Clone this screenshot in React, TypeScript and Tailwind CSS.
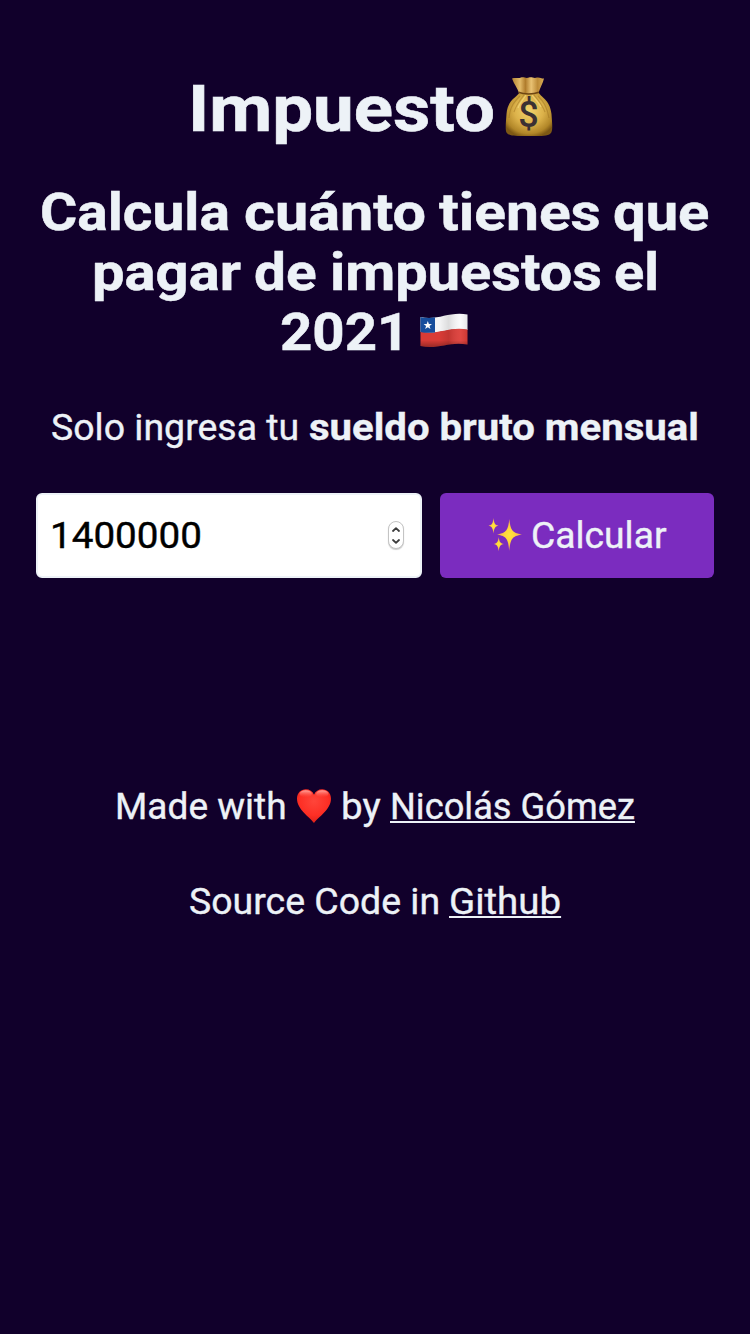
import React, { useState } from "react";

type WordProps = { box: string; scale: string; children: React.ReactNode };

/* A run of text in a fixed-width box, stretched horizontally from its left edge. */
function Word({ box, scale, children }: WordProps) {
  return (
    <span className={`block shrink-0 whitespace-nowrap ${box}`}>
      <span className={`inline-block origin-left ${scale}`}>{children}</span>
    </span>
  );
}

function MoneyBag() {
  return (
    <svg width="48" height="62" viewBox="0 0 48 62" aria-hidden="true">
      <defs>
        <radialGradient id="bag" cx="0.5" cy="0.42" r="0.62">
          <stop offset="0" stopColor="#f2d36c" />
          <stop offset="0.5" stopColor="#dcb24a" />
          <stop offset="0.85" stopColor="#b18628" />
          <stop offset="1" stopColor="#7d5814" />
        </radialGradient>
        <linearGradient id="ruffle" x1="0" x2="1">
          <stop offset="0" stopColor="#b38334" />
          <stop offset="0.25" stopColor="#e3bb69" />
          <stop offset="0.42" stopColor="#b07c2c" />
          <stop offset="0.6" stopColor="#e9c273" />
          <stop offset="0.8" stopColor="#bd8b38" />
          <stop offset="1" stopColor="#d9ac55" />
        </linearGradient>
      </defs>
      <path d="M14.500 16 C13 21 2.500 23 1.500 38 C1 46 0 53 1.500 56.500 C4 60.500 12 60 24 60 C36 60 44 60.500 46.300 56.500 C48 53 47 46 46.500 38 C45 23 35 21 33.500 16 Z" fill="url(#bag)" />
      <path d="M15 20 C10 25 5 30 4 42 M19 19 C15 24 11 29 9 36 M29 19 C33 24 37 28 40 36 M33 20 C38 25 42 30 44 42" fill="none" stroke="#936718" strokeWidth="1.100" opacity="0.4" />
      <path d="M21 19 C18 24 14 28 13 32 M27 19 C30 23 34 27 36 31" fill="none" stroke="#f5da7d" strokeWidth="1.300" opacity="0.7" />
      <path d="M7 2.500 C11 1 13 3 16 1.500 C19 .7 21 2.800 24 1.500 C27 .7 29 2.800 32 1.500 C35 1 37 3 39 2.500 C38 7 35 12 33.500 17 C29 18.500 19 18.500 14 17 C12.500 12 9 8 7 2.500 Z" fill="url(#ruffle)" />
      <path d="M13.500 16.300 C19 18.500 28 18.500 34 16.300" fill="none" stroke="#6e4613" strokeWidth="1.600" />
      <text x="23.500" y="51" textAnchor="middle" className="font-['Roboto',sans-serif] text-[36px] font-medium [-webkit-text-stroke:0.3px_#3b3033]" fill="#3b3033">$</text>
    </svg>
  );
}

function ChileFlag() {
  return (
    <svg width="48" height="36" viewBox="0 0 48 36" aria-hidden="true">
      <defs>
        <linearGradient id="cloth" x1="0" x2="1">
          <stop offset="0" stopColor="#000" stopOpacity="0.02" />
          <stop offset="0.4" stopColor="#000" stopOpacity="0.02" />
          <stop offset="0.6" stopColor="#000" stopOpacity="0.12" />
          <stop offset="0.85" stopColor="#fff" stopOpacity="0.06" />
          <stop offset="1" stopColor="#000" stopOpacity="0.08" />
        </linearGradient>
        <linearGradient id="hem" x1="0" x2="0" y1="0" y2="1">
          <stop offset="0.8" stopColor="#000" stopOpacity="0" />
          <stop offset="1" stopColor="#000" stopOpacity="0.3" />
        </linearGradient>
      </defs>
      <path d="M0.500 4 C18 8 29 -2 47.500 1.500 V17 C29 13.500 18 23 0.500 19 Z" fill="#fafafb" />
      <path d="M0.500 18.500 C18 22.500 29 13 47.500 16.500 V31.500 C29 28 18 37 0.500 33 Z" fill="#dd3c37" />
      <path d="M0.500 4 C6 5.300 10 5 15 4.300 V19.500 C10 20.100 6 20 0.500 19 Z" fill="#174f9f" />
      <path d="M7.800 8 L8.900 11 L12 11.100 L9.500 13 L10.500 16.100 L7.800 14.300 L5.100 16.100 L6.100 13 L3.600 11.100 L6.700 11 Z" fill="#fff" />
      <path d="M0.500 4 C18 8 29 -2 47.500 1.500 V31.500 C29 28 18 37 0.500 33 Z" fill="url(#cloth)" />
      <path d="M0.500 4 C18 8 29 -2 47.500 1.500 V31.500 C29 28 18 37 0.500 33 Z" fill="url(#hem)" />
    </svg>
  );
}

function Heart() {
  return (
    <svg width="36" height="36" viewBox="0 0 36 36" aria-hidden="true">
      <defs>
        <radialGradient id="heart" cx="0.5" cy="0.35" r="0.7">
          <stop offset="0" stopColor="#ff453a" />
          <stop offset="0.6" stopColor="#fd2f25" />
          <stop offset="1" stopColor="#d61f17" />
        </radialGradient>
        <linearGradient id="gloss" x1="0" x2="0" y1="0" y2="1">
          <stop offset="0" stopColor="#ffb0a8" stopOpacity="0.95" />
          <stop offset="1" stopColor="#ff5a4f" stopOpacity="0" />
        </linearGradient>
      </defs>
      <path d="M18 35 C14 29.500 1 21.500 1 10.800 C1 5 5 1.300 9.800 1.300 C13.500 1.300 16.500 3.300 18 6.700 C19.500 3.300 22.500 1.300 26.200 1.300 C31 1.300 35 5 35 10.800 C35 21.500 22 29.500 18 35 Z" fill="url(#heart)" />
      <ellipse cx="9.700" cy="5.800" rx="6.200" ry="3.600" fill="url(#gloss)" />
      <ellipse cx="26.300" cy="5.800" rx="6.200" ry="3.600" fill="url(#gloss)" />
    </svg>
  );
}

function Sparkles() {
  return (
    <svg width="36" height="36" viewBox="0 0 36 36" aria-hidden="true">
      <defs>
        <radialGradient id="spark">
          <stop offset="0" stopColor="#ffe43d" />
          <stop offset="0.35" stopColor="#ffd93b" />
          <stop offset="1" stopColor="#f0a35a" />
        </radialGradient>
      </defs>
      <path d="M21.300 1 C22.500 12 23.800 14.800 34 16.500 C23.800 18.200 22.500 21 21.300 33 C20.100 21 18.800 18.200 9 16.500 C18.800 14.800 20.100 12 21.300 1 Z" fill="url(#spark)" />
      <path d="M5.500 0 C6.200 5.600 6.900 6.900 10.500 7.700 C6.900 8.500 6.200 10 5.500 15.500 C4.800 10 4.100 8.500 0.500 7.700 C4.100 6.900 4.800 5.600 5.500 0 Z" fill="url(#spark)" />
      <path d="M10.700 19 C11.400 24 12.100 25.300 16 26.100 C12.100 26.900 11.400 28.400 10.700 33.300 C10 28.400 9.300 26.900 5.600 26.100 C9.300 25.300 10 24 10.700 19 Z" fill="url(#spark)" />
    </svg>
  );
}

function Stepper() {
  return (
    <div className="mb-px flex h-7 w-4 shrink-0 flex-col items-center justify-center gap-[7px] rounded-lg border border-[#c4c4c4] bg-white shadow-[0_1px_1px_rgba(0,0,0,0.2)]">
      <svg width="8" height="5" viewBox="0 0 8 5" fill="none" stroke="#3c3c3c" strokeWidth="1.800" strokeLinecap="round" strokeLinejoin="round" aria-hidden="true">
        <path d="M1 4 L4 1.200 L7 4" />
      </svg>
      <svg width="8" height="5" viewBox="0 0 8 5" fill="none" stroke="#3c3c3c" strokeWidth="1.800" strokeLinecap="round" strokeLinejoin="round" aria-hidden="true">
        <path d="M1 1 L4 3.800 L7 1" />
      </svg>
    </div>
  );
}

export default function App() {
  const [salary, setSalary] = useState("1400000");

  return (
    <main className="flex min-h-[1334px] w-[750px] flex-col bg-[#11002b] pt-[71px] font-['Roboto',sans-serif] text-[36px] leading-[44px] text-[#edf2f7] [-webkit-text-stroke:0.35px_#edf2f7]">
      <h1 className="flex h-[76px] pl-[188px] text-[65px] font-bold leading-[76px] [-webkit-text-stroke:0.6px_#edf2f7]">
        <Word box="w-[317px]" scale="scale-x-[1.118]">Impuesto</Word>
        <span className="pt-[5px]"><MoneyBag /></span>
      </h1>

      <h2 className="mt-[36px] text-[52px] font-bold leading-[60px] [-webkit-text-stroke:0.5px_#edf2f7]">
        <span className="flex h-[60px] pl-[40px]">
          <Word box="w-[204px]" scale="scale-x-[1.095]">Calcula</Word>
          <Word box="w-[195.300px]" scale="scale-x-[1.142]">cuánto</Word>
          <Word box="w-[174px]" scale="scale-x-[1.128]">tienes</Word>
          <Word box="w-[95px]" scale="scale-x-[1.113]">que</Word>
        </span>
        <span className="flex h-[60px] pl-[92px]">
          <Word box="w-[162px]" scale="scale-x-[1.114]">pagar</Word>
          <Word box="w-[75.500px]" scale="scale-x-[1.090]">de</Word>
          <Word box="w-[284.500px]" scale="scale-x-[1.110]">impuestos</Word>
          <Word box="w-[45px]" scale="scale-x-[1.076]">el</Word>
        </span>
        <span className="flex h-[60px] pl-[279.500px]">
          <Word box="w-[140.500px]" scale="scale-x-[1.085]">2021</Word>
          <span className="pt-[10px]"><ChileFlag /></span>
        </span>
      </h2>

      <p className="mt-[43px] flex h-[44px] pl-[51px]">
        <Word box="w-[258px]" scale="scale-x-[1.040]">Solo ingresa tu</Word>
        <strong className="font-bold">
          <Word box="w-[390px]" scale="scale-x-[1.114]">sueldo bruto mensual</Word>
        </strong>
      </p>

      <form className="mt-[43px] flex h-[85px] gap-[18px] px-9" onSubmit={(e) => e.preventDefault()}>
        <div className="flex w-[386px] shrink-0 items-center justify-between rounded-md border-2 border-[#edf2f7] bg-white pl-[12px] pr-4">
          <input
            className="w-[280px] origin-left scale-x-[1.072] bg-transparent text-[36px] leading-[44px] text-black outline-none [-webkit-text-stroke:0.4px_black]"
            inputMode="numeric"
            value={salary}
            onChange={(e) => setSalary(e.target.value)}
          />
          <Stepper />
        </div>
        <button className="flex w-[274px] shrink-0 items-center rounded-md bg-[#7b2cbf] pl-12">
          <Sparkles />
          <span className="ml-[7px] text-left"><Word box="w-[140px]" scale="scale-x-[1.035]">Calcular</Word></span>
        </button>
      </form>

      <footer className="mt-[207px]">
        <p className="flex h-[44px] pl-[115px]">
          <Word box="w-[181px]" scale="scale-x-[1.029]">Made with</Word>
          <span className="w-[45px] pt-[3px]"><Heart /></span>
          <Word box="w-[49px]" scale="scale-x-[1.070]">by</Word>
          <Word box="w-[245px]" scale="scale-x-[1.007]">
            <a href="#" className="underline decoration-2 underline-offset-[2px] [text-decoration-skip-ink:none]">Nicolás Gómez</a>
          </Word>
        </p>
        <p className="mt-[51px] flex h-[44px] pl-[189px]">
          <Word box="w-[260px]" scale="scale-x-[1.040]">Source Code in</Word>
          <Word box="w-[112px]" scale="scale-x-[1.068]">
            <a href="#" className="underline decoration-2 underline-offset-[2px] [text-decoration-skip-ink:none]">Github</a>
          </Word>
        </p>
      </footer>
    </main>
  );
}
